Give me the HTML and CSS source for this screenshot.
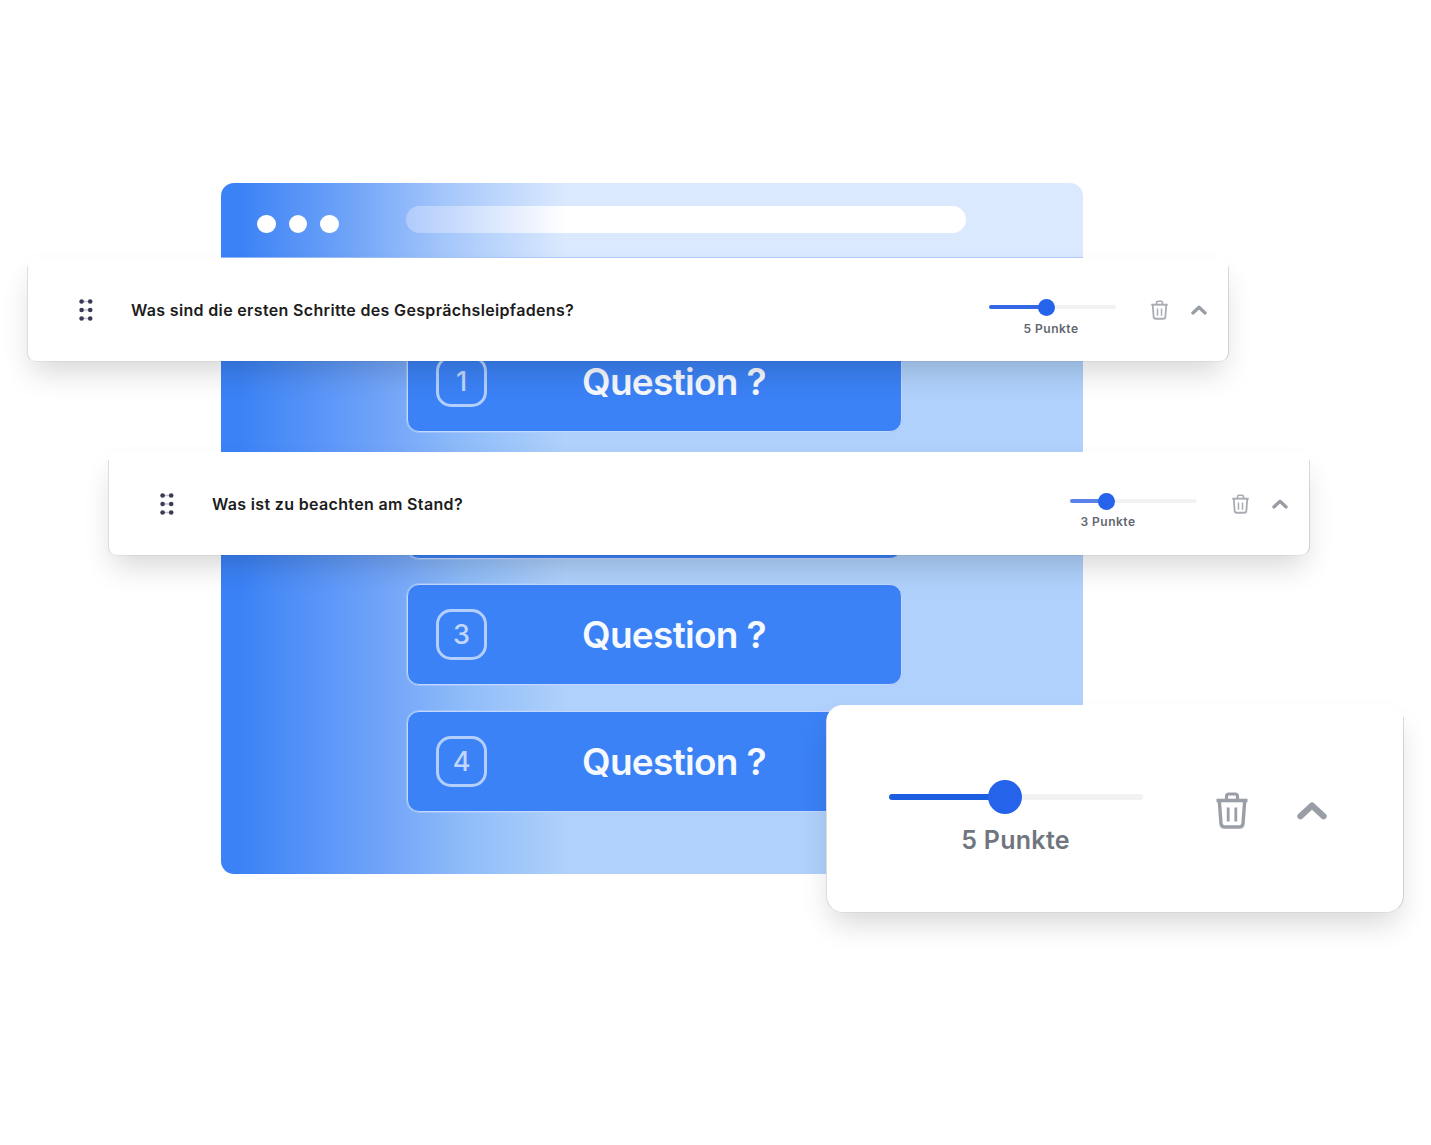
FILE: index.html
```html
<!DOCTYPE html>
<html lang="de">
<head>
    <meta charset="UTF-8">
    <meta name="viewport" content="width=device-width, initial-scale=1.0">
    <title>Gesprächsleitfaden</title>
    <link rel="stylesheet" href="styles.css">
</head>
<body>
    <svg class="sprite" width="0" height="0">
        <symbol id="trash" viewBox="0 0 32 37">
            <g fill="none" stroke="currentColor" stroke-linejoin="round">
                <path d="M0.5 8.5H31.5" stroke-width="3.6"/>
                <path d="M10.5 8V4.5Q10.5 2 13 2H19Q21.5 2 21.5 4.5V8" stroke-width="3.2"/>
                <path d="M3.3 9L5 31.5Q5.3 35 8.8 35H23.2Q26.7 35 27 31.5L28.7 9" stroke-width="3.4"/>
                <path d="M12.2 15.5V29.5M19.8 15.5V29.5" stroke-width="2.8"/>
            </g>
        </symbol>
        <symbol id="chevron" viewBox="0 0 30 19">
            <path d="M3.4 15.2L15 4.4L26.6 15.2" fill="none" stroke="currentColor" stroke-width="6.2" stroke-linecap="round" stroke-linejoin="round"/>
        </symbol>
        <symbol id="grip" viewBox="0 0 14 22">
            <path d="M2 2.5H12M2 11H12M2 19.5H12" stroke="#c3c6d2" stroke-width="1.5"/>
            <g fill="#3a3a56">
                <circle cx="2.6" cy="2.5" r="2.3"/><circle cx="11.2" cy="2.5" r="2.3"/>
                <circle cx="2.6" cy="11" r="2.3"/><circle cx="11.2" cy="11" r="2.3"/>
                <circle cx="2.6" cy="19.5" r="2.3"/><circle cx="11.2" cy="19.5" r="2.3"/>
            </g>
        </symbol>
    </svg>

    <div class="stage">
        <div class="browser">
            <div class="browser-bar">
                <div class="dots">
                    <span class="dot"></span>
                    <span class="dot"></span>
                    <span class="dot"></span>
                </div>
                <div class="address"></div>
            </div>
            <div class="browser-body">
                <div class="question">
                    <span class="number">1</span>
                    <span class="question-text">Question ?</span>
                </div>
                <div class="question"></div>
                <div class="question">
                    <span class="number">3</span>
                    <span class="question-text">Question ?</span>
                </div>
                <div class="question">
                    <span class="number">4</span>
                    <span class="question-text">Question ?</span>
                </div>
            </div>
        </div>

        <div class="card card-first">
            <svg class="grip"><use href="#grip"/></svg>
            <span class="title">Was sind die ersten Schritte des Gesprächsleipfadens?</span>
            <div class="points">
                <div class="track">
                    <div class="fill" style="width: 46%"></div>
                    <div class="thumb"></div>
                </div>
                <span class="label">5 Punkte</span>
            </div>
            <svg class="trash"><use href="#trash"/></svg>
            <svg class="chevron"><use href="#chevron"/></svg>
        </div>

        <div class="card card-second">
            <svg class="grip"><use href="#grip"/></svg>
            <span class="title">Was ist zu beachten am Stand?</span>
            <div class="points points-low">
                <div class="track">
                    <div class="fill" style="width: 29%"></div>
                    <div class="thumb"></div>
                </div>
                <span class="label">3 Punkte</span>
            </div>
            <svg class="trash"><use href="#trash"/></svg>
            <svg class="chevron"><use href="#chevron"/></svg>
        </div>

        <div class="card card-large">
            <div class="points">
                <div class="track">
                    <div class="fill" style="width: 46%"></div>
                    <div class="thumb"></div>
                </div>
                <span class="label">5 Punkte</span>
            </div>
            <svg class="trash"><use href="#trash"/></svg>
            <svg class="chevron"><use href="#chevron"/></svg>
        </div>
    </div>
</body>
</html>
```
FILE: styles.css
```css
* {
    box-sizing: border-box;
}

body {
    margin: 0;
    background-color: #fff;
    font-family: Inter, 'Liberation Sans', sans-serif;
}

.sprite {
    position: absolute;
}

.stage {
    position: relative;
    width: 1431px;
    height: 1145px;
    padding: 183px 0 0 221px;
    overflow: hidden;
}

/* browser window */
.browser {
    width: 862px;
    height: 691px;
    border-radius: 13px;
    overflow: hidden;
}

.browser-bar {
    display: flex;
    align-items: flex-start;
    height: 75px;
    padding: 23px 0 0 36px;
    background: linear-gradient(90deg, #3b82f6 18px, #70a4f8 130px, #a5c7fb 225px, #dbe9fe 345px);
    border-bottom: 1px solid rgba(165, 198, 250, 0.8);
}

.dots {
    display: flex;
    gap: 13px;
    margin-top: 8.5px;
}

.dot {
    width: 18.5px;
    height: 18.5px;
    border-radius: 50%;
    background-color: #fff;
}

.address {
    width: 560px;
    height: 27px;
    margin-left: 67px;
    border-radius: 14px;
    background: linear-gradient(90deg, #b0cbfb, #fff 160px);
}

.browser-body {
    display: flex;
    flex-direction: column;
    gap: 25.5px;
    height: 616px;
    padding: 73px 0 0 186px;
    background: linear-gradient(90deg, #3b82f6 18px, #74a6f9 170px, #8fbcf9 245px, #afd1fb 345px);
}

.question {
    display: flex;
    align-items: center;
    width: 495px;
    height: 101px;
    flex-shrink: 0;
    padding-left: 28px;
    border: 1px solid #c2d8fc;
    border-radius: 12px;
    box-shadow: 0 0 0 1px rgba(182, 206, 251, 0.5);
    background-color: #3b82f6;
}

.number {
    display: flex;
    align-items: center;
    justify-content: center;
    width: 51px;
    height: 51px;
    border: 3px solid #b4cffc;
    border-radius: 15px;
    color: #c1d7fd;
    font-size: 27px;
    font-weight: 500;
}

.question-text {
    margin-left: 95px;
    color: #f6f9ff;
    font-size: 37px;
    font-weight: 600;
    letter-spacing: -0.7px;
    line-height: 1;
}

/* floating cards */
.card {
    position: absolute;
    display: flex;
    align-items: flex-start;
    width: 1201px;
    height: 102px;
    background-color: #fff;
    border-radius: 0 0 9px 9px;
    box-shadow: 0 16px 30px -5px rgba(0, 0, 0, 0.16);
}

/* hairline on the sides, starts a bit below the top edge */
.card::after {
    content: '';
    position: absolute;
    inset: 8px -0.5px -0.5px -0.5px;
    border: 1px solid rgba(0, 0, 0, 0.13);
    border-top: none;
    border-bottom-color: rgba(0, 0, 0, 0.04);
    border-radius: 0 0 9px 9px;
}

.card-first {
    left: 27px;
    top: 258px;
    height: 103px;
    padding-top: 1px;
}

.card-second {
    left: 108px;
    top: 452px;
    height: 103px;
    padding-top: 1px;
}

.grip {
    width: 14px;
    height: 22px;
    margin: 40px 38px 0 52px;
}

.title {
    width: 858px;
    margin-top: 41px;
    color: #1c1c20;
    font-size: 16px;
    font-weight: 600;
    letter-spacing: 0.34px;
    line-height: 20px;
    white-space: nowrap;
}

.points {
    display: flex;
    flex-direction: column;
    align-items: center;
    width: 127px;
    margin-top: 46px;
}

.track {
    display: flex;
    align-items: center;
    width: 100%;
    height: 4px;
    border-radius: 3px;
    background-color: #f2f2f3;
}

.fill {
    height: 100%;
    border-radius: 3px;
    background-color: #3268e6;
}

.thumb {
    flex-shrink: 0;
    width: 17px;
    height: 17px;
    margin-left: -9px;
    border-radius: 50%;
    background-color: #2563eb;
}

.label {
    margin-top: 13px;
    margin-right: 3px;
    color: #62666f;
    font-size: 12px;
    font-weight: 600;
    letter-spacing: 0.5px;
    line-height: 14px;
    white-space: nowrap;
}

.points-low .label {
    margin-top: 12px;
    margin-right: 51px;
}

.points-low .fill {
    background-color: #5a82ea;
}

.trash {
    width: 17px;
    height: 20px;
    margin: 41px 0 0 34.5px;
    color: #a9acb3;
}

.chevron {
    width: 16px;
    height: 10px;
    margin: 46px 0 0 23px;
    color: #999da5;
}

.card-large {
    left: 826px;
    top: 705px;
    width: 577px;
    height: 207px;
    padding-left: 63px;
    border-radius: 17px;
}

.card-large::after {
    top: 12px;
    border-radius: 0 0 17px 17px;
}

.card-large .points {
    width: 254px;
    margin-top: 89px;
}

.card-large .track {
    height: 6px;
}

.card-large .fill {
    background-color: #1d5de0;
}

.card-large .thumb {
    width: 34px;
    height: 34px;
    margin-left: -18px;
}

.card-large .label {
    margin-top: 25px;
    margin-right: 1px;
    color: #71757e;
    font-size: 25px;
    letter-spacing: 0.3px;
    line-height: 30px;
}

.card-large .trash {
    width: 32px;
    height: 37px;
    margin: 87px 0 0 72.5px;
    color: #9a9ea6;
}

.card-large .chevron {
    width: 30px;
    height: 19px;
    margin: 96px 0 0 49px;
}
```
